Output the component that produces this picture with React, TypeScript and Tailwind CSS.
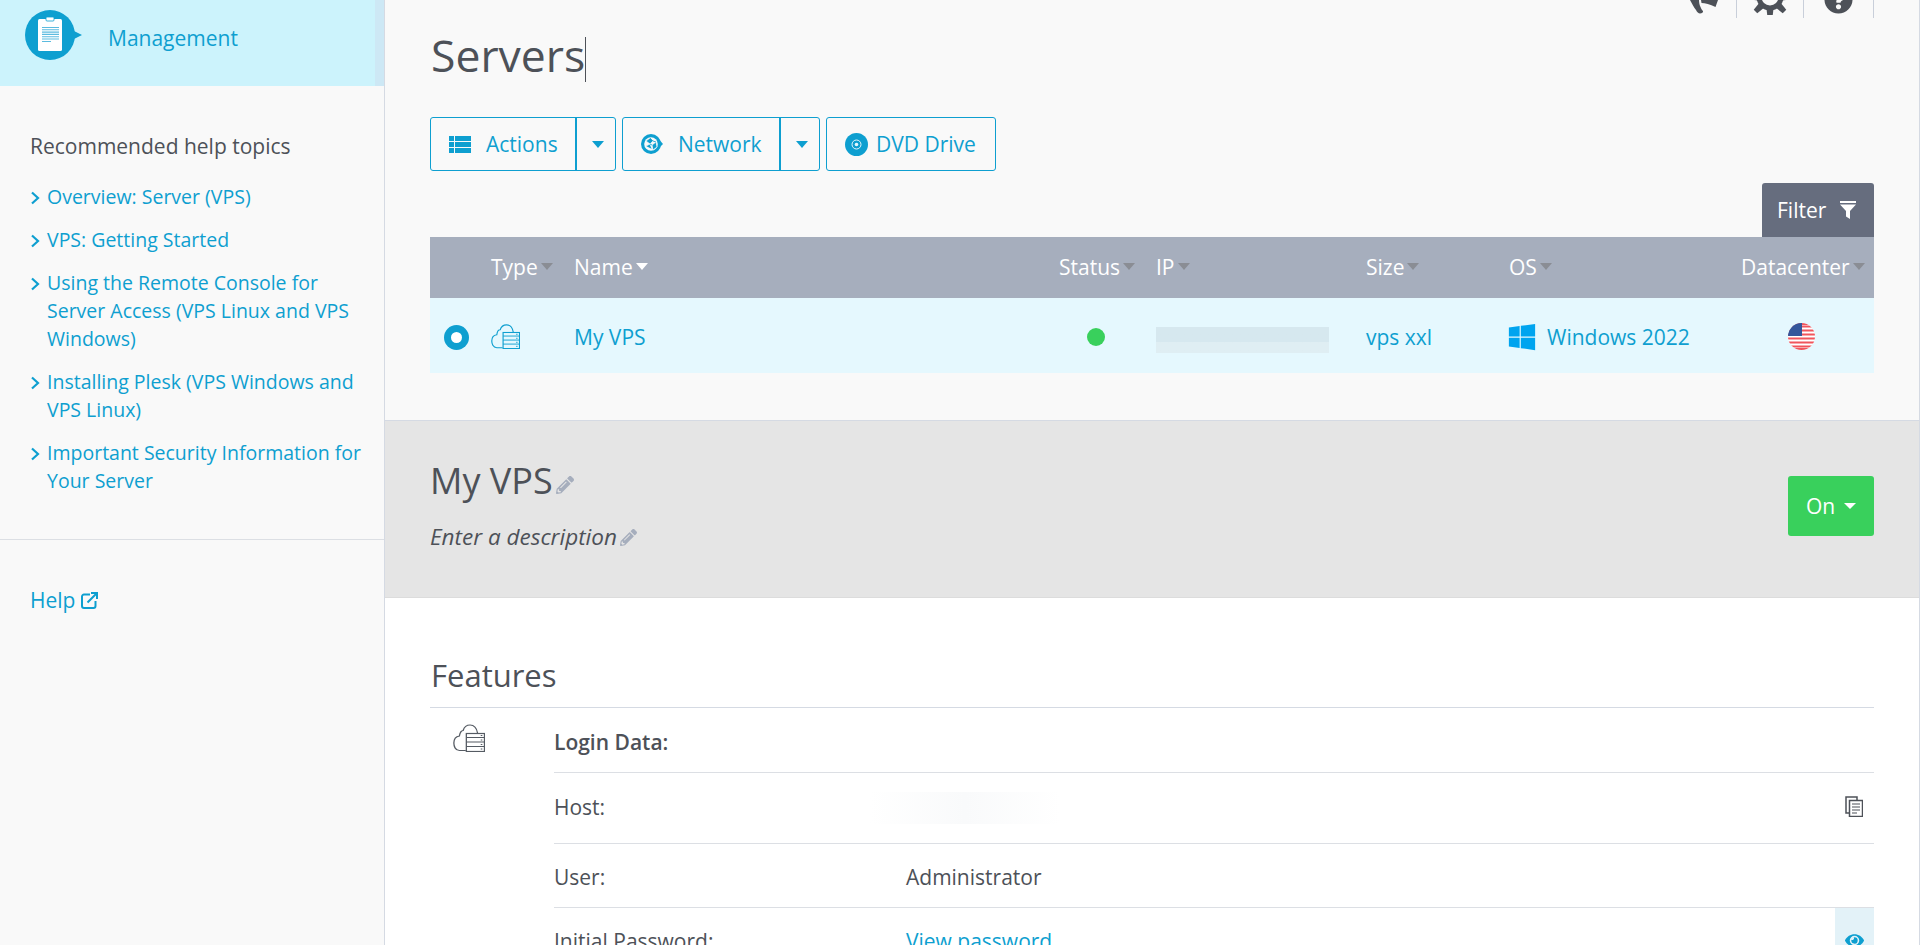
import { FaEye, FaPencilAlt, FaQuestionCircle, FaWindows } from "react-icons/fa";

const helpTopics = [
  "Overview: Server (VPS)",
  "VPS: Getting Started",
  "Using the Remote Console for Server Access (VPS Linux and VPS Windows)",
  "Installing Plesk (VPS Windows and VPS Linux)",
  "Important Security Information for Your Server",
];

function Caret({ light, blue }: { light?: boolean; blue?: boolean }) {
  return (
    <span
      className={`ml-[3px] inline-block h-0 w-0 border-x-[6px] border-t-[7px] border-x-transparent ${
        blue ? "border-t-[#0e9fd0]" : light ? "border-t-white" : "border-t-[#8a8d94]"
      }`}
    />
  );
}

function ClipboardBubble() {
  return (
    <svg width="58" height="50" viewBox="0 0 58 50" className="shrink-0">
      <circle cx="25" cy="25" r="25" fill="#0e9fd0" />
      <path d="M47 20l10 5-10 5z" fill="#0e9fd0" />
      <rect x="13" y="9" width="24" height="32" rx="1.500" fill="#fff" />
      <rect x="21" y="7" width="8" height="4" rx="1" fill="#fff" stroke="#0e9fd0" strokeWidth="0.8" />
      <path d="M17 17.500h17M17 19.800h17M17 22.100h17M17 24.400h17M17 26.700h17M17 29h17" stroke="#5bbbdf" strokeWidth="1.100" />
      <path d="M17 31.500h9" stroke="#5bbbdf" strokeWidth="1" />
    </svg>
  );
}

function CloudServer({ color, fill, className }: { color: string; fill: string; className: string }) {
  return (
    <svg viewBox="0 0 30 28" preserveAspectRatio="none" className={className} fill="none" stroke={color} strokeWidth="1.200">
      <path d="M12 26.500H6C2 26.500 0.800 22 0.800 19 0.800 15 3 12.500 6 12 6.500 8 8.500 6.500 9.500 6.500 10.500 3 13 1 16 1c3 0 6 2 7 8" />
      <rect x="12.500" y="9.500" width="17" height="18" fill={fill} />
      <path d="M12.500 13.500h17M12.500 18h17M12.500 22.500h17" strokeWidth="1" />
      <path d="M26 11.500h1.500M26 16h1.500M26 20.500h1.500M26 25h1.500" strokeWidth="1" />
    </svg>
  );
}

function ListIcon() {
  return (
    <svg width="22" height="17" viewBox="0 0 22 17" fill="#0e9fd0" className="shrink-0">
      <rect width="5" height="5" />
      <rect x="6" width="16" height="5" />
      <rect y="6" width="5" height="5" />
      <rect x="6" y="6" width="16" height="5" />
      <rect y="12" width="5" height="5" />
      <rect x="6" y="12" width="16" height="5" />
    </svg>
  );
}

function NetworkIcon() {
  return (
    <svg width="22" height="20" viewBox="0 0 22 20" className="shrink-0">
      <circle cx="10" cy="10" r="10" fill="#0e9fd0" />
      <path d="M19 6.500l3 3.500-3 3z" fill="#0e9fd0" />
      <circle cx="10" cy="10" r="6.800" fill="#f9f9f9" />
      <path d="M5 7l4-3 3 3-3 3zM11 11l4-3 1 5-4 3zM5 12l4-2 2 5" fill="#0e9fd0" stroke="#f9f9f9" strokeWidth="0.700" />
      <path d="M9 4l3 3 3 1M9 10l2 1" fill="none" stroke="#0e9fd0" strokeWidth="0.800" />
    </svg>
  );
}

function DvdIcon() {
  return (
    <svg width="23" height="23" viewBox="0 0 23 23" className="shrink-0">
      <circle cx="11.500" cy="11.500" r="11.500" fill="#0e9fd0" />
      <circle cx="11.500" cy="11.500" r="4.500" fill="none" stroke="#e5f8fe" strokeWidth="1" />
      <circle cx="11.500" cy="11.500" r="1.800" fill="#e5f8fe" />
    </svg>
  );
}

function FilterIcon() {
  return (
    <svg width="16" height="18" viewBox="0 0 16 18" className="shrink-0">
      <path d="M0 0h16v2H0zM0 3.500h16L10 10v8l-4-2.500V10z" fill="#fff" />
    </svg>
  );
}

function MegaphoneIcon() {
  return (
    <svg width="28" height="14" viewBox="0 0 28 14" fill="currentColor" className="shrink-0">
      <path d="M0 0h9c0 2.500 0.500 5 1.500 7 0.500 1.500 1.500 3 2.500 4 0.500 1-1 2.500-3 2.500-1.500 0-3-1.500-4-3.500C4 8 2 3.500 0 0z" />
      <path d="M11 0h17l-2.500 7C20 4.500 15 3 11.500 3z" />
    </svg>
  );
}

function GearIcon() {
  const teeth = [0, 45, 90, 135, 180];
  return (
    <svg width="34" height="15" viewBox="0 0 34 15" fill="currentColor" className="shrink-0">
      <circle cx="17" cy="-3" r="11" fill="none" stroke="currentColor" strokeWidth="5" />
      {teeth.map((angle) => (
        <path key={angle} d="M13.500 8.500h7l-1 9h-5z" transform={`rotate(${angle - 90} 17 -3)`} />
      ))}
    </svg>
  );
}

function UsFlag() {
  const stripes = [2.5, 6.5, 10.5, 14.5, 18.5, 22.5];
  return (
    <svg width="27" height="27" viewBox="0 0 27 27">
      <clipPath id="flag-clip">
        <circle cx="13.500" cy="13.500" r="13.500" />
      </clipPath>
      <g clipPath="url(#flag-clip)">
        <rect width="27" height="27" fill="#fff" />
        {stripes.map((y) => (
          <rect key={y} y={y} width="27" height="2" fill="#f0555c" />
        ))}
        <rect width="27" height="2" fill="#f0555c" />
        <rect y="25" width="27" height="2" fill="#f0555c" />
        <rect width="14" height="13" fill="#33569b" />
      </g>
    </svg>
  );
}

function ExternalIcon() {
  return (
    <svg width="17" height="17" viewBox="0 0 17 17" fill="none" stroke="#0e9fd0" strokeWidth="2">
      <path d="M9 2.500H3a2 2 0 0 0-2 2V14a2 2 0 0 0 2 2h9.500a2 2 0 0 0 2-2V9" />
      <path d="M6.500 10.500L15 2M10 1h6v6" />
    </svg>
  );
}

function CopyIcon() {
  return (
    <svg width="18" height="21" viewBox="0 0 18 21" fill="none" stroke="#4d5158" strokeWidth="1.500">
      <path d="M4 17H1V1h11v3" />
      <rect x="4.500" y="4.500" width="13" height="16" fill="#fff" />
      <path d="M7 8h8M7 11h8M7 14h8M7 17h5" strokeWidth="1.200" />
    </svg>
  );
}

function TopTool({ children, width }: { children: React.ReactNode; width: string }) {
  return (
    <div className={`flex h-full items-end justify-center overflow-hidden border-r border-[#c9cfda] text-[#4d5158] ${width}`}>
      {children}
    </div>
  );
}

function SplitButton({ icon, label, widths }: { icon: React.ReactNode; label: string; widths: string }) {
  return (
    <div className={`flex h-[54px] rounded-[3px] border border-[#0e9fd0] text-[#0e9fd0] ${widths}`}>
      <div className="flex flex-1 items-center gap-[15px] border-r-2 border-[#0e9fd0] pl-[18px]">
        {icon}
        <span>{label}</span>
      </div>
      <div className="flex w-[38px] items-center justify-center">
        <Caret blue />
      </div>
    </div>
  );
}

function HeaderCell({ label, light }: { label: string; light?: boolean }) {
  return (
    <div className="flex items-center">
      <span>{label}</span>
      <Caret light={light} />
    </div>
  );
}

function FeatureRow({ children, height }: { children: React.ReactNode; height: string }) {
  return <div className={`flex items-center border-b border-[#dcdfe4] ${height}`}>{children}</div>;
}

export default function App() {
  return (
    <div className="flex h-[945px] w-[1920px] overflow-hidden bg-[#f9f9f9] font-['Open_Sans',sans-serif] text-[21px] leading-[28px] text-[#4d5158]">
      {/* Sidebar */}
      <aside className="w-[385px] shrink-0 border-r border-[#d5dae3]">
        <div className="flex h-[86px] bg-[#ccf3fc]">
          <div className="flex flex-1 items-start gap-[25px] pl-[25px] pt-[10px]">
            <ClipboardBubble />
            <span className="mt-[14px] text-[#0e9fd0]">Management</span>
          </div>
          <div className="w-[9px] bg-[#cde8f5]" />
        </div>

        <div className="mt-[46px] border-b border-[#dcdfe4] pb-[44px] pl-[30px] pr-[18px]">
          <div>Recommended help topics</div>
          <ul className="mt-[23px] flex flex-col gap-[15px] text-[19.500px]">
            {helpTopics.map((topic) => (
              <li key={topic} className="relative pl-[17px] text-[#0e9fd0]">
                <svg
                  width="10"
                  height="14"
                  viewBox="0 0 10 14"
                  fill="none"
                  stroke="#0e9fd0"
                  strokeWidth="2.200"
                  className="absolute left-0 top-[8px]"
                >
                  <path d="M2 1.500L8 7l-6 5.500" />
                </svg>
                {topic}
              </li>
            ))}
          </ul>
        </div>

        <div className="mt-[46px] flex items-center gap-[6px] pl-[30px] text-[#0e9fd0]">
          Help
          <ExternalIcon />
        </div>
      </aside>

      {/* Main */}
      <main className="flex-1 border-r border-[#d5dae3]">
        <div className="flex h-[18px] justify-end pr-[45px]">
          <TopTool width="pr-[18px]">
            <div className="mb-[4px]">
              <MegaphoneIcon />
            </div>
          </TopTool>
          <TopTool width="w-[67px]">
            <div className="mb-[3px]">
              <GearIcon />
            </div>
          </TopTool>
          <TopTool width="w-[70px]">
            <FaQuestionCircle size={29} className="mb-[4px] shrink-0" />
          </TopTool>
        </div>

        <div className="px-[45px]">
          <h1 className="mt-[19px] flex h-[45px] items-center text-[44.500px]">
            <span className="inline-block h-[45px] border-r border-[#4d5158] pl-px leading-[35px]">Servers</span>
          </h1>

          <div className="mt-[35px] flex gap-[6px]">
            <SplitButton icon={<ListIcon />} label="Actions" widths="w-[186px]" />
            <SplitButton icon={<NetworkIcon />} label="Network" widths="w-[198px]" />
            <div className="flex h-[54px] w-[170px] items-center gap-[8px] rounded-[3px] border border-[#0e9fd0] pl-[18px] text-[#0e9fd0]">
              <DvdIcon />
              <span>DVD Drive</span>
            </div>
          </div>

          <div className="mt-[12px] flex justify-end">
            <div className="flex h-[54px] w-[112px] items-center gap-[14px] rounded-t-[3px] bg-[#666d7e] pl-[15px] text-white">
              Filter
              <FilterIcon />
            </div>
          </div>

          <div className="grid h-[61px] grid-cols-[61px_83px_485px_97px_210px_143px_232px_1fr] items-center bg-[#a6aebd] pb-[2px] text-white">
            <div />
            <HeaderCell label="Type" />
            <HeaderCell label="Name" light />
            <HeaderCell label="Status" />
            <HeaderCell label="IP" />
            <HeaderCell label="Size" />
            <HeaderCell label="OS" />
            <HeaderCell label="Datacenter" />
          </div>
          <div className="grid h-[75px] grid-cols-[61px_83px_485px_97px_210px_143px_232px_1fr] items-center bg-[#e5f8fe] text-[#0e9fd0]">
            <div className="mt-[3px] pl-[14px]">
              <div className="flex h-[25px] w-[25px] items-center justify-center rounded-full bg-[#0e9fd0]">
                <div className="h-[11px] w-[11px] rounded-full bg-white" />
              </div>
            </div>
            <CloudServer color="#0e9fd0" fill="#e5f8fe" className="mt-[2px] h-[25px] w-[29px]" />
            <div className="mt-[3px]">My VPS</div>
            <div className="mt-[2px] pl-[28px]">
              <div className="h-[18px] w-[18px] rounded-full bg-[#39d05c]" />
            </div>
            <div className="mt-[8px] h-[26px] w-[173px] bg-gradient-to-b from-[#d6e8ef] from-[58%] to-[#dfeef3] to-[58%]" />
            <div className="mt-[3px]">vps xxl</div>
            <div className="mt-[3px] -ml-[2px] flex items-center gap-[10px]">
              <FaWindows size={30} className="text-[#00a4ef]" />
              Windows 2022
            </div>
            <div className="mt-[2px] flex pl-[47px]">
              <UsFlag />
            </div>
          </div>
        </div>

        <div className="mt-[47px] flex h-[178px] items-center justify-between border-y border-t-[#d5dae3] border-b-[#dcdcdc] bg-[#e5e5e5] px-[45px]">
          <div className="-mt-[10px]">
            <div className="flex items-end text-[36px] leading-[48px]">
              My VPS
              <FaPencilAlt size={18} className="mb-[11px] ml-[3px] text-[#a6aebd]" />
            </div>
            <div className="mt-[18px] flex items-center text-[22.500px] italic">
              Enter a description
              <FaPencilAlt size={17} className="ml-[3px] text-[#a6aebd]" />
            </div>
          </div>
          <div className="-mt-[6px] flex h-[60px] w-[86px] items-center justify-center gap-[9px] rounded-[3px] bg-[#39d05c] text-white">
            On
            <span className="inline-block h-0 w-0 border-x-[6px] border-t-[6px] border-x-transparent border-t-white" />
          </div>
        </div>

        <div className="h-full bg-white px-[45px]">
          <h2 className="flex h-[110px] items-end border-b border-[#d5dae3] pb-[10px] pl-px text-[31px] leading-[44px]">
            Features
          </h2>
          <div className="flex">
            <div className="w-[124px] shrink-0 pl-[23px] pt-[16px]">
              <CloudServer color="#555b63" fill="#fff" className="h-[28px] w-[32px]" />
            </div>
            <div className="flex-1">
              <FeatureRow height="h-[65px]">
                <span className="pt-[3px] font-semibold">Login Data:</span>
              </FeatureRow>
              <FeatureRow height="h-[71px]">
                <span className="w-[316px] pb-[2px]">Host:</span>
                <div className="h-[32px] w-[190px] bg-gradient-to-r from-white via-[#f9fafb] to-white" />
                <div className="mb-[3px] ml-auto mr-[11px]">
                  <CopyIcon />
                </div>
              </FeatureRow>
              <FeatureRow height="h-[64px]">
                <span className="w-[352px] pt-[2px]">User:</span>
                <span className="pt-[2px]">Administrator</span>
              </FeatureRow>
              <div className="flex h-[64px] items-center">
                <span className="w-[352px] pt-[2px]">Initial Password:</span>
                <span className="pt-[2px] text-[#0e9fd0]">View password</span>
                <div className="ml-auto flex h-full w-[39px] items-center justify-center bg-[#e3f2f8] text-[#0e9fd0]">
                  <FaEye size={19} />
                </div>
              </div>
            </div>
          </div>
        </div>
      </main>
    </div>
  );
}
